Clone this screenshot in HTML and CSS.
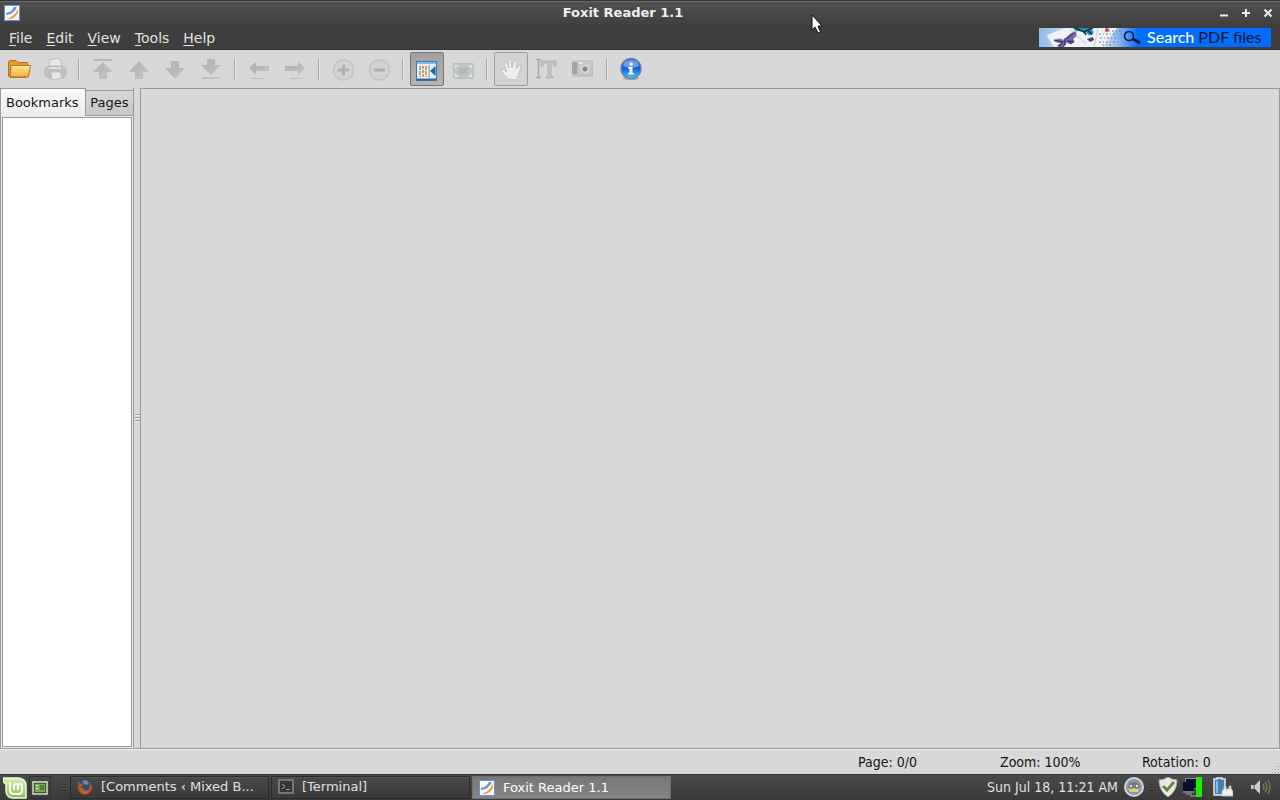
FILE: index.html
```html
<!DOCTYPE html>
<html lang="en">
<head>
<meta charset="utf-8">
<title>Foxit Reader 1.1</title>
<link rel="stylesheet" href="styles.css">
</head>
<body>
<svg class="defs" width="0" height="0" aria-hidden="true">
  <defs>
    <linearGradient id="folder" x2="0" y2="1"><stop offset="0" stop-color="#ffe08c"/><stop offset="1" stop-color="#f5b240"/></linearGradient>
    <linearGradient id="gray" x2="1" y2="1"><stop offset="0" stop-color="#b0b3b3"/><stop offset=".5" stop-color="#b7baba"/><stop offset="1" stop-color="#c6c8c8"/></linearGradient>
    <linearGradient id="info" x2="0" y2="1"><stop offset="0" stop-color="#2b5bd8"/><stop offset=".5" stop-color="#1260dc"/><stop offset="1" stop-color="#35d2ff"/></linearGradient>
    <linearGradient id="mint" x2="0" y2="1"><stop offset="0" stop-color="#d8f0b8"/><stop offset="1" stop-color="#83c447"/></linearGradient>
    <linearGradient id="wing" x2="1" y2="1"><stop offset="0" stop-color="#a3a2dc"/><stop offset="1" stop-color="#503f86"/></linearGradient>
    <symbol id="foxit" viewBox="0 0 16 16">
      <rect x=".5" y=".5" width="15" height="15" fill="#f8fbff" stroke="#6d91cf"/>
      <path d="M2 8Q8 7 10 2H13Q10 9 2 10Z" fill="#6a92dc"/>
      <path d="M3 14Q11 11 14 4V8Q11 13 6 14Z" fill="#ef9925"/>
    </symbol>
  </defs>
</svg>

<header class="titlebar">
  <svg class="app-icon" viewBox="0 0 16 16"><use href="#foxit"/></svg>
  <h1 class="title">Foxit Reader 1.1</h1>
  <div class="window-controls">
    <button class="window-button" aria-label="Minimize"><svg viewBox="0 0 10 10"><path d="M1 7.5H9" stroke="#eee" stroke-width="2"/></svg></button>
    <button class="window-button" aria-label="Maximize"><svg viewBox="0 0 10 10"><path d="M1 5H9M5 1V9" stroke="#eee" stroke-width="2"/></svg></button>
    <button class="window-button" aria-label="Close"><svg viewBox="0 0 10 10"><path d="M1.5 1.5 8.5 8.5M8.5 1.5 1.5 8.5" stroke="#eee" stroke-width="2"/></svg></button>
  </div>
</header>

<nav class="menubar">
  <button class="menu"><u>F</u>ile</button>
  <button class="menu"><u>E</u>dit</button>
  <button class="menu"><u>V</u>iew</button>
  <button class="menu"><u>T</u>ools</button>
  <button class="menu"><u>H</u>elp</button>
  <a class="banner" href="#">
    <svg class="banner-art" viewBox="0 0 104 19">
      <defs><linearGradient id="sky"><stop offset="0" stop-color="#8dbcee"/><stop offset=".2" stop-color="#b7cfe8"/><stop offset=".62" stop-color="#dfe5ef"/><stop offset=".8" stop-color="#75a9f1"/><stop offset=".95" stop-color="#006eff"/></linearGradient></defs>
      <rect width="104" height="19" fill="url(#sky)"/>
      <path d="M8 7 26 0H78L64 19H14Z" fill="#f1f2f5"/>
      <path d="M7 8 15 19M31 1 47 16M59 0 55 19" stroke="#c3cad5" fill="none"/>
      <path d="M25 12Q20 9 15 12 15 15 22 15 17 17 19 19H25L28 14Q31 18 34 15 37 14 34 11 39 8 37 3 31 4 26 11Z" fill="url(#wing)"/>
      <path d="M15 12 24 14 20 18M27 11 35 5M28 13 34 14M26 10V17" stroke="#2a2148" fill="none"/>
      <path d="M34 0Q36 4 43 3L45 6 47 4Q49 8 53 7 56 4 53 2L55 0Z" fill="#1c94b4"/>
      <path d="M36 0 45 4 53 0M45 3 47 7M49 3 53 6" stroke="#12283d" stroke-width="1.500" fill="none"/>
      <path d="M48 11 54 9 55 12 51 14Z" fill="#39427a"/>
      <path d="M60 6H83M61 10H83M60 14H80M66 3H84M63 17H74" stroke="#6d7890" stroke-dasharray="2 2 1 2"/>
      <circle cx="68" cy="2" r="2" fill="#b24b78"/>
      <circle cx="90" cy="8" r="4.500" fill="none" stroke="#03152e" stroke-width="1.500"/>
      <path d="M94 11 101 15" stroke="#03152e" stroke-width="3"/>
    </svg>
    <span class="banner-text">Search <span class="banner-dark">PDF files</span></span>
  </a>
</nav>

<div class="toolbar" role="toolbar" aria-label="Main">
  <button class="tool" aria-label="Open"><svg viewBox="0 0 24 24"><path d="M1.500 19V5Q2 3.500 3.500 3.500H9L11 5.500H20.500L21.500 18 19 20.500H3Z" fill="#e89b31" stroke="#b56f1c"/><path d="M4 8.500H23.500L21.500 20H3Z" fill="url(#folder)" stroke="#b5711d"/><path d="M5 9.500H22" stroke="#fff0b5"/></svg></button>
  <button class="tool" aria-label="Print"><svg viewBox="0 0 24 24"><path d="M6 3 15 1 18 4 19 12H7Z" fill="#e9e9e9" stroke="#c0c0c0"/><path d="M2 12 6 9H19L23 12V18L20 21H6L2 18Z" fill="#bfc0c1" stroke="#b1b2b3"/><path d="M8 15H17L19 21 9 23Z" fill="#e9e9e9" stroke="#bdbdbd"/><path d="M6 11H18" stroke="#ddd" stroke-width="2"/></svg></button>
  <span class="separator"></span>
  <button class="tool" aria-label="First page"><svg viewBox="0 0 24 24"><path d="M3 2H21V4H3ZM12 5 2 15H8V22H16V15H22Z" fill="url(#gray)"/></svg></button>
  <button class="tool" aria-label="Previous page"><svg viewBox="0 0 24 24"><path d="M12 4 2 15H8V22H16V15H22Z" fill="url(#gray)"/></svg></button>
  <button class="tool" aria-label="Next page"><svg viewBox="0 0 24 24"><path d="M8 4H16V11H22L12 22 2 11H8Z" fill="url(#gray)"/></svg></button>
  <button class="tool" aria-label="Last page"><svg viewBox="0 0 24 24"><path d="M8 2H16V8H22L12 18 2 8H8ZM3 20H21V22H3Z" fill="url(#gray)"/></svg></button>
  <span class="separator"></span>
  <button class="tool" aria-label="Back"><svg viewBox="0 0 24 24"><path d="M2 11 9 5V9H22V14H9V18ZM4 21H17V22H4Z" fill="url(#gray)"/></svg></button>
  <button class="tool" aria-label="Forward"><svg viewBox="0 0 24 24"><path d="M22 11 15 5V9H2V14H15V18ZM7 21H20V22H7Z" fill="url(#gray)"/></svg></button>
  <span class="separator"></span>
  <button class="tool" aria-label="Zoom in"><svg viewBox="0 0 24 24"><circle cx="12.500" cy="13" r="10" fill="#d2d3d3" stroke="#c1c3c3" stroke-width="1.500"/><path d="M7 13H18M12.500 7.500V18.500" stroke="#aeb1b1" stroke-width="3"/></svg></button>
  <button class="tool" aria-label="Zoom out"><svg viewBox="0 0 24 24"><circle cx="12.500" cy="13" r="10" fill="#d2d3d3" stroke="#c1c3c3" stroke-width="1.500"/><path d="M7 13H18" stroke="#aeb1b1" stroke-width="3"/></svg></button>
  <span class="separator"></span>
  <button class="tool pressed" aria-label="Navigation pane" aria-pressed="true"><svg viewBox="0 0 24 24"><rect x="1.500" y="4.500" width="20" height="19" fill="#e7f0fa" stroke="#4277b5"/><path d="M2 6H21" stroke="#86b9eb" stroke-width="2"/><path d="M2 22.500H21" stroke="#2867af" stroke-width="2"/><rect x="3" y="8" width="10" height="13" fill="#fff6e4"/><path d="M5 9V20M11 9V20" stroke="#a3a79b" stroke-width="2" stroke-dasharray="4 1"/><path d="M8 9V20" stroke="#df8f6b" stroke-width="2" stroke-dasharray="3 1"/><path d="M14 8V21" stroke="#888"/><path d="M20.500 9V19L15 14Z" fill="#0b6cae"/></svg></button>
  <button class="tool" aria-label="Full screen"><svg viewBox="0 0 24 24"><rect x="2.500" y="6.500" width="20" height="15" rx="1" fill="#c0c5c8" stroke="#babec1"/><rect x="8" y="11" width="9" height="6" fill="#b3b8bb"/><path d="M4 8H8L4 12ZM17 8H21V12ZM4 16 8 20H4ZM21 16V20H17Z" fill="#e1e4e5"/></svg></button>
  <span class="separator"></span>
  <button class="tool held" aria-label="Hand tool" aria-pressed="true"><svg viewBox="0 0 24 24"><path d="M9 22 2 14Q2 11 4 12L8 15 5 7Q5 4 7 5L10 11 9 4Q10 1 12 3L13 11 15 4Q17 2 18 5L17 12 20 8Q22 7 22 10L19 19 17 23Z" fill="#eee" stroke="#c0c1c1"/></svg></button>
  <button class="tool" aria-label="Select text"><svg viewBox="0 0 24 24"><path d="M1 2.500H6M3.500 3V20M1 20.500H6" stroke="#a2a4a4" stroke-width="1.500" fill="none"/><path d="M6 4H21V9H19Q19 6 16 6V18L18 20V21H11V20L13 18V6Q8 5 8 9H6Z" fill="#c0c1c1" stroke="#b1b2b2"/></svg></button>
  <button class="tool" aria-label="Snapshot"><svg viewBox="0 0 24 24"><path d="M1 4H22V20H1Z" fill="#c2c3c3"/><path d="M1 5H6V17H1Z" fill="#a3a5a5"/><path d="M7 4H21V18H7Z" fill="#ccc" stroke="#b8b9b9"/><circle cx="14" cy="12" r="5" fill="#d8d8d8" stroke="#c2c2c2"/><circle cx="14" cy="12" r="2.500" fill="#858788"/><path d="M8 6H11" stroke="#eee" stroke-width="2"/></svg></button>
  <span class="separator"></span>
  <button class="tool" aria-label="About"><svg viewBox="0 0 24 24"><ellipse cx="12" cy="21" rx="8" ry="2" fill="#a8a8a8"/><circle cx="12" cy="11.500" r="10" fill="url(#info)" stroke="#6a83ac" stroke-width="1.500"/><path d="M4 9Q5 3 12 3T20 9Q12 13 4 9Z" fill="#9fc4fa" opacity=".6"/><circle cx="12" cy="7" r="1.800" fill="#fff"/><path d="M9 10H13.500V16H15V17.500H9V16H10.500V11.500H9Z" fill="#fff"/></svg></button>
</div>

<main class="workspace">
  <aside class="sidebar">
    <div class="tabs" role="tablist">
      <button class="tab active" role="tab" aria-selected="true">Bookmarks</button>
      <button class="tab" role="tab" aria-selected="false">Pages</button>
    </div>
    <div class="panel" role="tabpanel" aria-label="Bookmarks"></div>
  </aside>
  <div class="splitter" role="separator"><span class="grip"></span></div>
  <section class="document" aria-label="Document"></section>
</main>

<footer class="statusbar">
  <span class="status">Page: 0/0</span>
  <span class="status">Zoom: 100%</span>
  <span class="status">Rotation: 0</span>
  <span class="resize-grip"></span>
</footer>

<div class="taskbar">
  <button class="launcher" aria-label="Menu"><svg class="mint-icon" viewBox="0 0 24 22"><path d="M0 1H16Q23 2 23 9V21H9Q3 20 3 13V7Q0 6 0 1Z" fill="url(#mint)" stroke="#eef7e3" stroke-width="1.500"/><path d="M7 5V13Q7 17 11 17H16Q19 17 19 13V9Q19 7 17 7T15 9V13M15 9Q15 7 13 7T11 9V13" fill="none" stroke="#fff" stroke-width="2"/></svg></button>
  <button class="desktop-button" aria-label="Show desktop"><svg class="desktop-icon" viewBox="0 0 16 14"><rect x="1" y="1" width="14" height="12" fill="#3d572e" stroke="#d3e5c3" stroke-width="1.500"/><rect x="3" y="3" width="10" height="8" fill="#7ba759"/><path d="M4 4H6V5H4ZM4 7H6V8H4Z" fill="#e6f4d9"/><path d="M8 4H12V9H8Z" fill="#537f37"/></svg></button>
  <span class="task-grip"></span>
  <div class="tasks">
    <button class="task"><svg viewBox="0 0 16 16"><circle cx="8" cy="8" r="6.500" fill="#344d70"/><path d="M5 2 9 1 12 4 10 6 7 5Z" fill="#6f8aa8"/><path d="M1 2 4 5 6 5 5 8 8 11Q12 12 13 7L12 3Q17 8 14 12 11 17 5 15 0 12 1 7Z" fill="#ab582c"/><path d="M3 9Q5 15 11 13" stroke="#d47a2f" fill="none"/></svg><span class="task-label">[Comments ‹ Mixed B...</span></button>
    <button class="task"><svg viewBox="0 0 16 16"><rect x="1" y="1" width="14" height="13" fill="#353535" stroke="#8b8b8b" stroke-width="1.500"/><path d="M4 5 7 7.500 4 10M8 10.500H12" fill="none" stroke="#aaa"/></svg><span class="task-label">[Terminal]</span></button>
    <button class="task current"><svg viewBox="0 0 16 16"><use href="#foxit"/></svg><span class="task-label">Foxit Reader 1.1</span></button>
  </div>
  <div class="tray">
    <time class="clock">Sun Jul 18, 11:21 AM</time>
    <svg class="tray-icon pidgin" viewBox="0 0 20 20"><circle cx="10" cy="10" r="9" fill="#8b98a9" stroke="#cbd5e2" stroke-width="2"/><path d="M4 11Q4 5 10 5T16 11L14 15H6Z" fill="#777c80"/><path d="M4 11 8 12 10 11 12 12 16 11 14 15H6Z" fill="#e4cc6c"/><path d="M6 9H8M12 9H14" stroke="#fff" stroke-width="1.500"/></svg>
    <span class="task-grip"></span>
    <svg class="tray-icon" viewBox="0 0 20 20"><path d="M10 0Q14 3 19 3 19 14 10 20 1 14 1 3 6 3 10 0Z" fill="#e8e9e5" stroke="#aaa"/><path d="M5 9 9 13 16 5" fill="none" stroke="#638c38" stroke-width="3"/></svg>
    <svg class="tray-icon network" viewBox="0 0 20 20"><path d="M3 1H15V12H3Z" fill="#888"/><path d="M4 2H14V11H4ZM1 5H12V14H1Z" fill="#080e26"/><path d="M1 15H12M4 17H10M8 19H16" stroke="#aaa"/><path d="M14 0H20V20H14Z" fill="#1bf000"/></svg>
    <svg class="tray-icon battery" viewBox="0 0 20 20"><path d="M1 2H4V1H9V2H12V18H1Z" fill="#427eae" stroke="#e4e9eb" stroke-width="1.500"/><path d="M4 4V16" stroke="#83bce5" stroke-width="2"/><path d="M9 14 11 12V9H13V12H16V9H18V12L20 14V19H9Z" fill="#eee" stroke="#bbb"/></svg>
    <svg class="tray-icon volume" viewBox="0 0 20 20"><path d="M0 8H4L9 3V17L4 12H0Z" fill="#cbcbcb"/><path d="M3 8V12" stroke="#555"/><path d="M12 7Q14 10 12 13M14 5Q18 10 14 15M17 3Q21 10 17 17" stroke="#638242" stroke-width="1.500" fill="none"/></svg>
  </div>
</div>

<svg class="pointer" viewBox="0 0 12 20" aria-hidden="true"><path d="M1 1V16L4 13 7 19 9.500 18 7 12H11Z" fill="#fff" stroke="#111"/></svg>
</body>
</html>
```

FILE: styles.css
```css
* {
  box-sizing: border-box;
}

body {
  margin: 0;
  height: 100vh;
  display: flex;
  flex-direction: column;
  overflow: hidden;
  background: #d8d8d8;
  color: #151515;
  font-family: "DejaVu Sans", sans-serif;
  font-size: 13px;
  line-height: 16px;
}

button {
  margin: 0;
  padding: 0;
  border: 0;
  background: none;
  color: inherit;
  font: inherit;
}

svg {
  display: block;
  flex: none;
}

.defs {
  position: absolute;
}

.titlebar {
  flex: none;
  height: 26px;
  display: grid;
  grid-template-columns: 68px 1fr 68px;
  align-items: center;
  padding-bottom: 2px;
  border-top: 1px solid #343434;
  box-shadow: inset 0 1px #6b6b6b;
  background: linear-gradient(#505050, #404040);
  color: #eee;
}

.app-icon {
  width: 16px;
  height: 16px;
  margin-left: 4px;
}

.title {
  margin: 0 34px 0 0;
  font-size: 13px;
  line-height: 16px;
  text-align: center;
}

.window-controls {
  display: flex;
  justify-content: flex-end;
  gap: 12px;
  padding-right: 7px;
}

.window-button svg {
  width: 10px;
  height: 10px;
}

.menubar {
  flex: none;
  height: 24px;
  display: flex;
  align-items: center;
  padding: 0 9px 0 2px;
  border-bottom: 1px solid #333;
  background: #3e3e3e;
  color: #e2e2e2;
  font-size: 14px;
}

.menu {
  padding: 0 7px;
}

.menu u {
  text-underline-offset: 2px;
}

.banner {
  width: 232px;
  height: 19px;
  display: flex;
  align-items: center;
  margin-left: auto;
  background: #006eff;
  color: #fff;
  font-family: Lato, sans-serif;
  font-size: 16px;
  font-weight: 500;
  text-decoration: none;
  white-space: nowrap;
}

.banner-art {
  width: 104px;
  height: 19px;
}

.banner-text {
  padding: 0 0 2px 4px;
}

.banner-dark {
  color: #061a3c;
}

.toolbar {
  flex: none;
  height: 38px;
  display: flex;
  align-items: center;
  padding: 0 1px;
  background: #d8d8d8;
}

.tool {
  width: 34px;
  height: 34px;
  display: flex;
  align-items: center;
  justify-content: center;
  margin: 0 1px;
  border: 1px solid transparent;
  border-radius: 2px;
}

.tool svg {
  width: 24px;
  height: 24px;
}

.pressed {
  border-color: #747474;
  background: linear-gradient(#a0a0a0, #b5b5b5);
}

.held {
  border-color: #9d9d9d;
  background: #d2d2d2;
}

.separator {
  width: 2px;
  height: 22px;
  margin: 0 5px;
  border-left: 1px solid #a7a7a7;
  border-right: 1px solid #e8e8e8;
}

.workspace {
  flex: 1;
  min-height: 0;
  display: flex;
  border-bottom: 1px solid #f0f0f0;
}

.sidebar {
  width: 134px;
  display: flex;
  flex-direction: column;
  border: solid #999;
  border-width: 0 1px 1px;
  background: #ececec;
}

.tabs {
  flex: none;
  height: 28px;
  display: flex;
  align-items: flex-end;
  background: #d8d8d8;
}

.tab {
  height: 26px;
  flex: 1;
  border-top: 1px solid #999;
  border-bottom: 1px solid #999;
  background: linear-gradient(#d8d8d8, #c7c7c7);
  white-space: nowrap;
}

.tab.active {
  height: 28px;
  flex: none;
  padding: 0 6px 0 5px;
  border-top: 1px solid #999;
  border-right: 1px solid #999;
  border-bottom: 0;
  background: linear-gradient(#fafafa, #ececec);
}

.panel {
  flex: 1;
  margin: 1px;
  border: 1px solid #999;
  background: #fff;
}

.splitter {
  width: 6px;
  display: flex;
  align-items: center;
  justify-content: center;
  border-bottom: 1px solid #999;
}

.grip {
  width: 5px;
  height: 8px;
  background: repeating-linear-gradient(#999 0 1px, #eee 1px 2px, transparent 2px 3px);
}

.document {
  flex: 1;
  border: 1px solid #999;
}

.statusbar {
  flex: none;
  height: 24px;
  display: flex;
  align-items: center;
  justify-content: flex-end;
  font-family: "DejaVu Sans Condensed", "DejaVu Sans", sans-serif;
  font-size: 14px;
}

.status {
  width: 142px;
}

.status:nth-child(3) {
  width: 126px;
}

.resize-grip {
  width: 12px;
  height: 12px;
  align-self: flex-end;
  clip-path: polygon(100% 0, 100% 100%, 0 100%);
  background: radial-gradient(circle, #999 1px, transparent 1px) 0 0 / 3px 3px;
}

.taskbar {
  flex: none;
  height: 26px;
  display: flex;
  align-items: center;
  padding: 0 9px 0 3px;
  border-top: 1px solid #343434;
  background: linear-gradient(#4a4a4a, #393939);
  color: #e0e0e0;
}

.mint-icon {
  width: 24px;
  height: 22px;
}

.desktop-button {
  width: 22px;
  height: 23px;
  display: flex;
  align-items: center;
  justify-content: center;
  margin-left: 2px;
  border: 1px solid #303030;
}

.desktop-icon {
  width: 16px;
  height: 14px;
}

.task-grip {
  width: 3px;
  height: 7px;
  margin: 0 4px 0 12px;
  background: repeating-linear-gradient(#292929 0 1px, #555 1px 2px, transparent 2px 3px);
}

.tasks {
  flex: 0 1 601px;
  min-width: 0;
  display: flex;
  gap: 2px;
}

.task {
  height: 23px;
  flex: 1 1 0;
  min-width: 0;
  display: flex;
  align-items: center;
  gap: 8px;
  padding: 0 6px 2px;
  border: 1px solid #2b2b2b;
  box-shadow: inset 0 1px #535353;
}

.task svg {
  width: 16px;
  height: 16px;
}

.task-label {
  overflow: hidden;
  text-overflow: ellipsis;
  white-space: nowrap;
}

.current {
  padding: 0 6px;
  border-color: #6f6f6f;
  background: linear-gradient(#777, #858585);
  box-shadow: none;
  color: #fff;
}

.tray {
  display: flex;
  align-items: center;
  margin-left: auto;
  padding-bottom: 1px;
  white-space: nowrap;
}

.clock {
  font-family: "DejaVu Sans Condensed", "DejaVu Sans", sans-serif;
  font-size: 14px;
}

.tray .task-grip {
  margin: 0 5px 0 6px;
}

.tray-icon {
  width: 20px;
  height: 20px;
}

.pidgin {
  margin-left: 6px;
}

.network {
  margin-left: 4px;
}

.battery {
  margin-left: 11px;
}

.volume {
  margin-left: 18px;
}

.pointer {
  position: absolute;
  top: 14px;
  left: 811px;
  width: 12px;
  height: 20px;
}
```
